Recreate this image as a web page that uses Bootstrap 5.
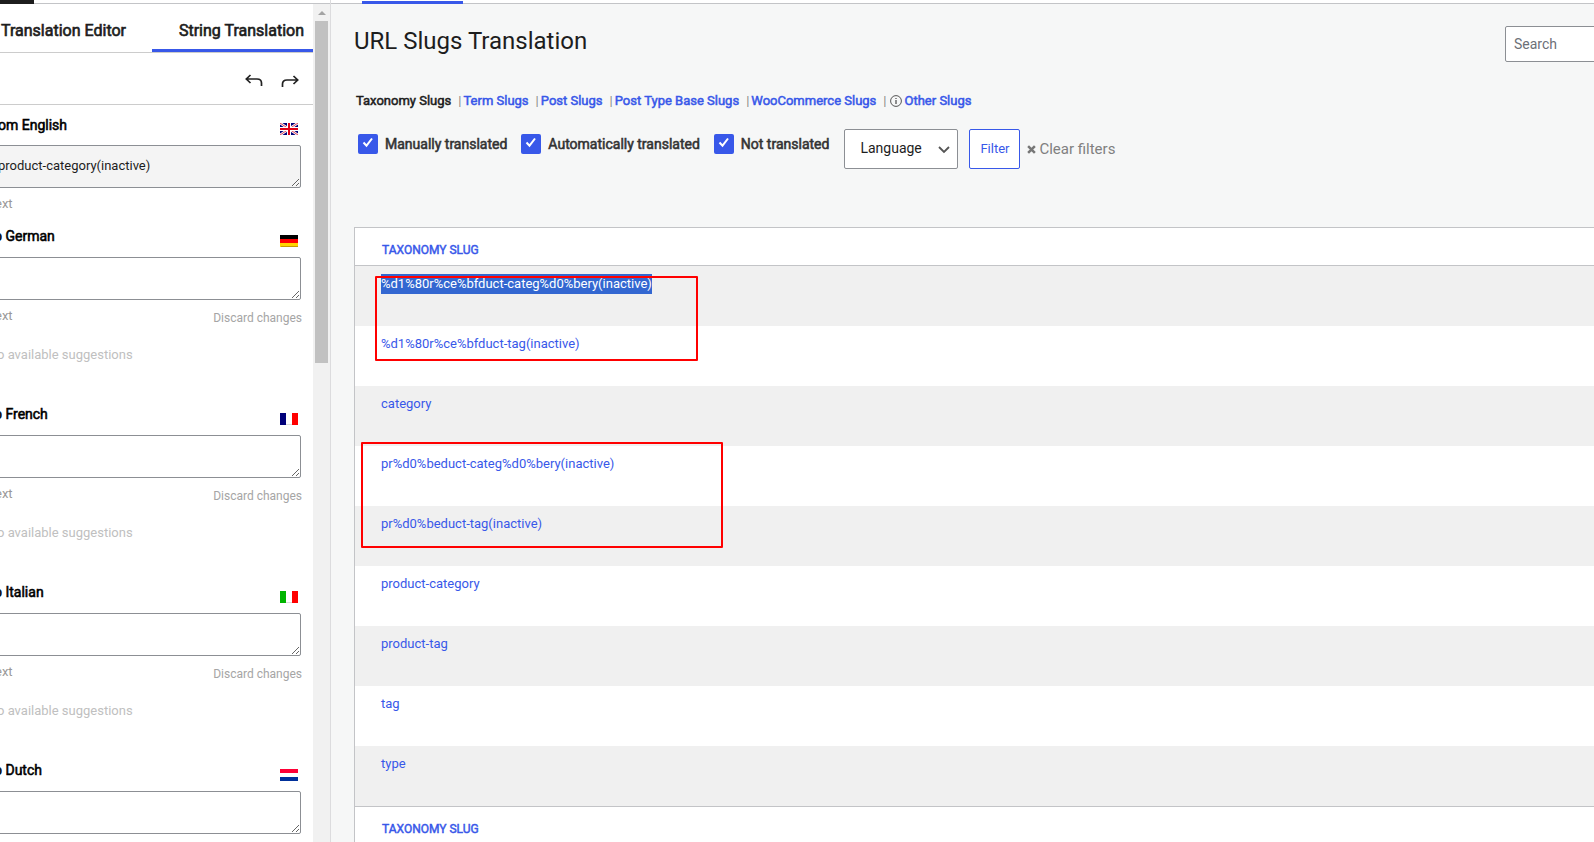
<!DOCTYPE html>
<html lang="en">
<head>
<meta charset="utf-8">
<meta name="viewport" content="width=device-width, initial-scale=1">
<title>URL Slugs Translation</title>
<link href="https://cdn.jsdelivr.net/npm/bootstrap@5.3.0/dist/css/bootstrap.min.css" rel="stylesheet">
<style>
:root { --accent: #3858e9; --line: #c3c4c7; --edge: #8c8f94; --ink: #1d1d1d; }
body { font-family: Roboto, "Liberation Sans", sans-serif; font-size: 13px; line-height: 20px; color: var(--ink); background: #f6f7f7; }
a { color: var(--accent); text-decoration: none; }
.strong-text { font-weight: 400; -webkit-text-stroke: .04em currentColor; }

/* left editor panel */
.editor { width: 331px; border-right: 1px solid #dcdcde; }
.editor-top { height: 4px; border-bottom: 1px solid var(--line); background: #fff; }
.editor-top span { width: 34px; height: 4px; background: #1d1d1d; }
.pane { min-width: 0; background: #fff; }
.tabs { height: 49px; border-bottom: 1px solid #ccc; font-size: 16px; }
.tabs button { border: 0; background: none; padding: 5px 0 0 1px; color: var(--ink); }
.tabs .current { width: 161px; padding: 8px 9px 0 0; border-bottom: 3px solid var(--accent); text-align: right; }
.tools { height: 52px; padding: 4px 14px 0 0; gap: 18px; border-bottom: 1px solid #ccc; }
.tools button { border: 0; background: none; padding: 0; line-height: 0; }
.lang { height: 178px; padding: 0 12px 0 0; }
.lang.source { height: 112px; }
.lang-head { height: 40px; padding-top: 9px; padding-right: 3px; }
.lang-head label { margin-left: -6px; font-size: 14px; line-height: 20px; color: #000; }
.source .lang-head label { margin-left: -2px; line-height: 22px; }
.lang-head svg { margin-top: 9px; }
.lang textarea { width: 306px; height: 43px; margin-left: -5px; padding: 10px 2px; border: 1px solid var(--edge); border-radius: 2px; color: var(--ink); background: #fff; font-size: 13px; line-height: 20px; overflow: hidden; flex: none; }
.lang textarea:read-only { background: #f4f4f4; }
.hint { margin-left: -5px; padding-top: 6px; font-size: 13px; color: #999; }
.discard { border: 0; padding: 8px 0 0; margin-right: -1px; background: none; font-size: 12px; color: #a5a5a5; }
.none { margin-left: -3px; padding-top: 17px; color: #c0c0c0; }
.rail { width: 17px; padding: 6px 2px 0; background: #f1f1f1; }
.rail i { width: 13px; height: 342px; margin-top: 5px; background: #c1c1c1; }

/* right page */
.page { min-width: 0; }
.page-top { height: 4px; padding-left: 31px; border-bottom: 1px solid var(--line); background: #fff; }
.page-top span { width: 101px; height: 3px; margin-top: 1px; background: var(--accent); }
.page-body { padding-left: 23px; }
.title { margin: 20px 0 0; font-size: 24px; line-height: 34px; font-weight: 400; }
.search { width: 100px; height: 36px; margin: 22px -11px 0 0; padding: 0 8px; border: 1px solid var(--edge); border-radius: 2px; font-size: 14px; flex: none; }
.search::placeholder { color: #6c7077; }
.kinds { margin: 29px 0 0 2px; padding: 0; list-style: none; }
.kinds li + li { margin-left: 7px; }
.kinds li + li::before { content: "|"; margin-right: 2px; color: #888; -webkit-text-stroke: 0; }
.kinds svg { margin: 0 3px 0 1px; }
.filters { margin: 18px 0 0 4px; height: 40px; font-size: 14px; }
.filters .form-check-input { width: 20px; height: 20px; margin: 5px 7px 0 0; border: 0; border-radius: 2px; background-size: 16px; background-position: center 1px; }
.filters .form-check-input:checked { background-color: var(--accent); background-image: url("data:image/svg+xml,%3csvg xmlns='http://www.w3.org/2000/svg' viewBox='0 0 16 16'%3e%3cpath d='M3.500 7.500l3 3.200 5.500-7.200' fill='none' stroke='%23fff' stroke-width='2'/%3e%3c/svg%3e"); }
.filters label { margin: 5px 14px 0 0; color: #333; }
.lang-pick { width: 114px; height: 40px; margin-left: 1px; padding: 0 12px 2px 15px; border: 1px solid var(--edge); border-radius: 2px; font-size: 14px; line-height: 20px; color: var(--ink); background-color: #fff; background-size: 14px; background-position: right 6px center; background-image: url("data:image/svg+xml,%3csvg xmlns='http://www.w3.org/2000/svg' viewBox='0 0 14 14'%3e%3cpath d='M2 5l5 5 5-5' fill='none' stroke='%23555' stroke-width='1.800'/%3e%3c/svg%3e"); }
.filter-btn { width: 51px; height: 40px; margin-left: 11px; padding: 0; border: 1px solid var(--accent); border-radius: 2px; color: var(--accent); background: #fff; font-size: 13px; }
.clear { margin-left: 7px; color: #808080; gap: 3px; font-size: 15px; }

.slugs { margin-top: 58px; border: 1px solid var(--line); border-width: 1px 0 0 1px; background: #fff; }
.slugs table { width: 100%; border-collapse: separate; border-spacing: 0; }
.slugs th { height: 38px; padding: 7px 27px 0; font-size: 12px; }
.slugs thead th { border-bottom: 1px solid var(--line); }
.slugs tfoot th { border-top: 1px solid var(--line); }
.slugs td { height: 60px; padding: 8px 26px; vertical-align: top; }
.slugs tbody tr:nth-child(odd) { background: #f0f0f0; }
.slugs td .picked { display: inline-block; color: #fff; background: #3367d1; }
.outline { position: absolute; border: 2px solid #f00; border-radius: 1px; }
.outline-a { left: 20px; top: 48px; width: 323px; height: 85px; }
.outline-b { left: 6px; top: 214px; width: 362px; height: 106px; }
</style>
</head>
<body>
<div class="d-flex vh-100 overflow-hidden">
  <aside class="editor d-flex flex-column flex-shrink-0 overflow-hidden">
    <div class="editor-top flex-shrink-0"><span class="d-block"></span></div>
    <div class="d-flex flex-grow-1 overflow-hidden">
      <div class="pane flex-grow-1 overflow-hidden">
        <div class="tabs d-flex justify-content-between">
          <button type="button" class="strong-text">Translation Editor</button>
          <button type="button" class="current strong-text">String Translation</button>
        </div>
        <div class="tools d-flex justify-content-end align-items-center">
          <button type="button" aria-label="Undo"><svg width="18" height="14" viewBox="0 0 18 14" fill="none" stroke="#222" stroke-width="1.7"><path d="M5.5 1L1.3 5l4.2 4M1.5 5H12q4.5 0 4.500 4v3"/></svg></button>
          <button type="button" aria-label="Redo"><svg width="18" height="14" viewBox="0 0 18 14" fill="none" stroke="#222" stroke-width="1.7"><path d="M12.500 2l4.200 4-4.200 4M16.500 6H6Q1.500 6 1.500 10v3"/></svg></button>
        </div>

        <section class="lang source">
          <div class="lang-head d-flex justify-content-between align-items-start">
            <label for="src" class="strong-text">om English</label>
            <svg width="18" height="12" viewBox="0 0 18 12"><path fill="#00007a" d="M0 0h18v12H0z"/><path d="M0 0l18 12M18 0L0 12" stroke="#fff" stroke-width="2.600"/><path d="M0 0l18 12M18 0L0 12" stroke="#d8102a" stroke-width=".8"/><path d="M9 0v12M0 6h18" stroke="#fff" stroke-width="4"/><path d="M9 0v12M0 6h18" stroke="#e00016" stroke-width="2"/></svg>
          </div>
          <div class="d-flex"><textarea id="src" readonly>product-category(inactive)</textarea></div>
          <div class="hint">ext</div>
        </section>

        <section class="lang">
          <div class="lang-head d-flex justify-content-between align-items-start">
            <label for="de" class="strong-text">o German</label>
            <svg width="18" height="12"><path d="M0 0h18v4H0z"/><path fill="#f00" d="M0 4h18v4H0z"/><path fill="#ffd500" d="M0 8h18v4H0z"/><path fill="#c89a00" d="M1 11h17v1H1z"/></svg>
          </div>
          <div class="d-flex"><textarea id="de"></textarea></div>
          <div class="d-flex justify-content-between align-items-start"><span class="hint">ext</span><button type="button" class="discard">Discard changes</button></div>
          <div class="none">o available suggestions</div>
        </section>

        <section class="lang">
          <div class="lang-head d-flex justify-content-between align-items-start">
            <label for="fr" class="strong-text">o French</label>
            <svg width="18" height="12"><path fill="#fff" d="M0 0h18v12H0z"/><path fill="#00007a" d="M0 0h6v12H0z"/><path fill="#f00" d="M12 0h6v12h-6z"/><path fill="#ddd" d="M6 11h6v1H6z"/></svg>
          </div>
          <div class="d-flex"><textarea id="fr"></textarea></div>
          <div class="d-flex justify-content-between align-items-start"><span class="hint">ext</span><button type="button" class="discard">Discard changes</button></div>
          <div class="none">o available suggestions</div>
        </section>

        <section class="lang">
          <div class="lang-head d-flex justify-content-between align-items-start">
            <label for="it" class="strong-text">o Italian</label>
            <svg width="18" height="12"><path fill="#fff" d="M0 0h18v12H0z"/><path fill="#00b400" d="M0 0h6v12H0z"/><path fill="#f00" d="M12 0h6v12h-6z"/><path fill="#ddd" d="M6 11h6v1H6z"/></svg>
          </div>
          <div class="d-flex"><textarea id="it"></textarea></div>
          <div class="d-flex justify-content-between align-items-start"><span class="hint">ext</span><button type="button" class="discard">Discard changes</button></div>
          <div class="none">o available suggestions</div>
        </section>

        <section class="lang">
          <div class="lang-head d-flex justify-content-between align-items-start">
            <label for="nl" class="strong-text">o Dutch</label>
            <svg width="18" height="12"><path fill="#fff" d="M0 0h18v12H0z"/><path fill="#ff0036" d="M0 0h18v4H0z"/><path fill="#00309a" d="M0 8h18v4H0z"/></svg>
          </div>
          <div class="d-flex"><textarea id="nl"></textarea></div>
        </section>
      </div>
      <div class="rail d-flex flex-column align-items-center flex-shrink-0">
        <svg width="8" height="6" viewBox="0 0 8 6"><path fill="#a3a3a3" d="M4 1l4 4H0z"/></svg>
        <i></i>
      </div>
    </div>
  </aside>

  <main class="page flex-grow-1 overflow-hidden">
    <div class="page-top"><span class="d-inline-block align-top"></span></div>
    <div class="page-body">
      <header class="d-flex justify-content-between align-items-start">
        <h1 class="title">URL Slugs Translation</h1>
        <input type="search" class="search" placeholder="Search" aria-label="Search">
      </header>

      <ul class="kinds d-flex strong-text">
        <li>Taxonomy Slugs</li>
        <li><a href="#">Term Slugs</a></li>
        <li><a href="#">Post Slugs</a></li>
        <li><a href="#">Post Type Base Slugs</a></li>
        <li><a href="#">WooCommerce Slugs</a></li>
        <li class="d-flex align-items-center"><svg width="12" height="12" viewBox="0 0 12 12" fill="none" stroke="#555"><circle cx="6" cy="6" r="5.400"/><path d="M6 5v4M6 3v1" stroke-width="1.300"/></svg><a href="#">Other Slugs</a></li>
      </ul>

      <form class="filters d-flex align-items-start">
        <input class="form-check-input" type="checkbox" id="manual" checked><label class="strong-text" for="manual">Manually translated</label>
        <input class="form-check-input" type="checkbox" id="auto" checked><label class="strong-text" for="auto">Automatically translated</label>
        <input class="form-check-input" type="checkbox" id="not" checked><label class="strong-text" for="not">Not translated</label>
        <select class="form-select lang-pick" aria-label="Language"><option>Language</option></select>
        <button type="button" class="filter-btn">Filter</button>
        <a href="#" class="clear d-flex align-items-center h-100"><svg width="9" height="9" viewBox="0 0 8 8" stroke="#777" stroke-width="2.200"><path d="M1 1l6 6M7 1L1 7"/></svg>Clear filters</a>
      </form>

      <div class="slugs position-relative">
        <table>
          <thead><tr><th class="strong-text"><a href="#">TAXONOMY SLUG</a></th></tr></thead>
          <tbody>
            <tr><td><a href="#" class="picked">%d1%80r%ce%bfduct-categ%d0%bery(inactive)</a></td></tr>
            <tr><td><a href="#">%d1%80r%ce%bfduct-tag(inactive)</a></td></tr>
            <tr><td><a href="#">category</a></td></tr>
            <tr><td><a href="#">pr%d0%beduct-categ%d0%bery(inactive)</a></td></tr>
            <tr><td><a href="#">pr%d0%beduct-tag(inactive)</a></td></tr>
            <tr><td><a href="#">product-category</a></td></tr>
            <tr><td><a href="#">product-tag</a></td></tr>
            <tr><td><a href="#">tag</a></td></tr>
            <tr><td><a href="#">type</a></td></tr>
          </tbody>
          <tfoot><tr><th class="strong-text"><a href="#">TAXONOMY SLUG</a></th></tr></tfoot>
        </table>
        <div class="outline outline-a"></div>
        <div class="outline outline-b"></div>
      </div>
    </div>
  </main>
</div>
<script src="https://cdn.jsdelivr.net/npm/bootstrap@5.3.0/dist/js/bootstrap.bundle.min.js"></script>
</body>
</html>
